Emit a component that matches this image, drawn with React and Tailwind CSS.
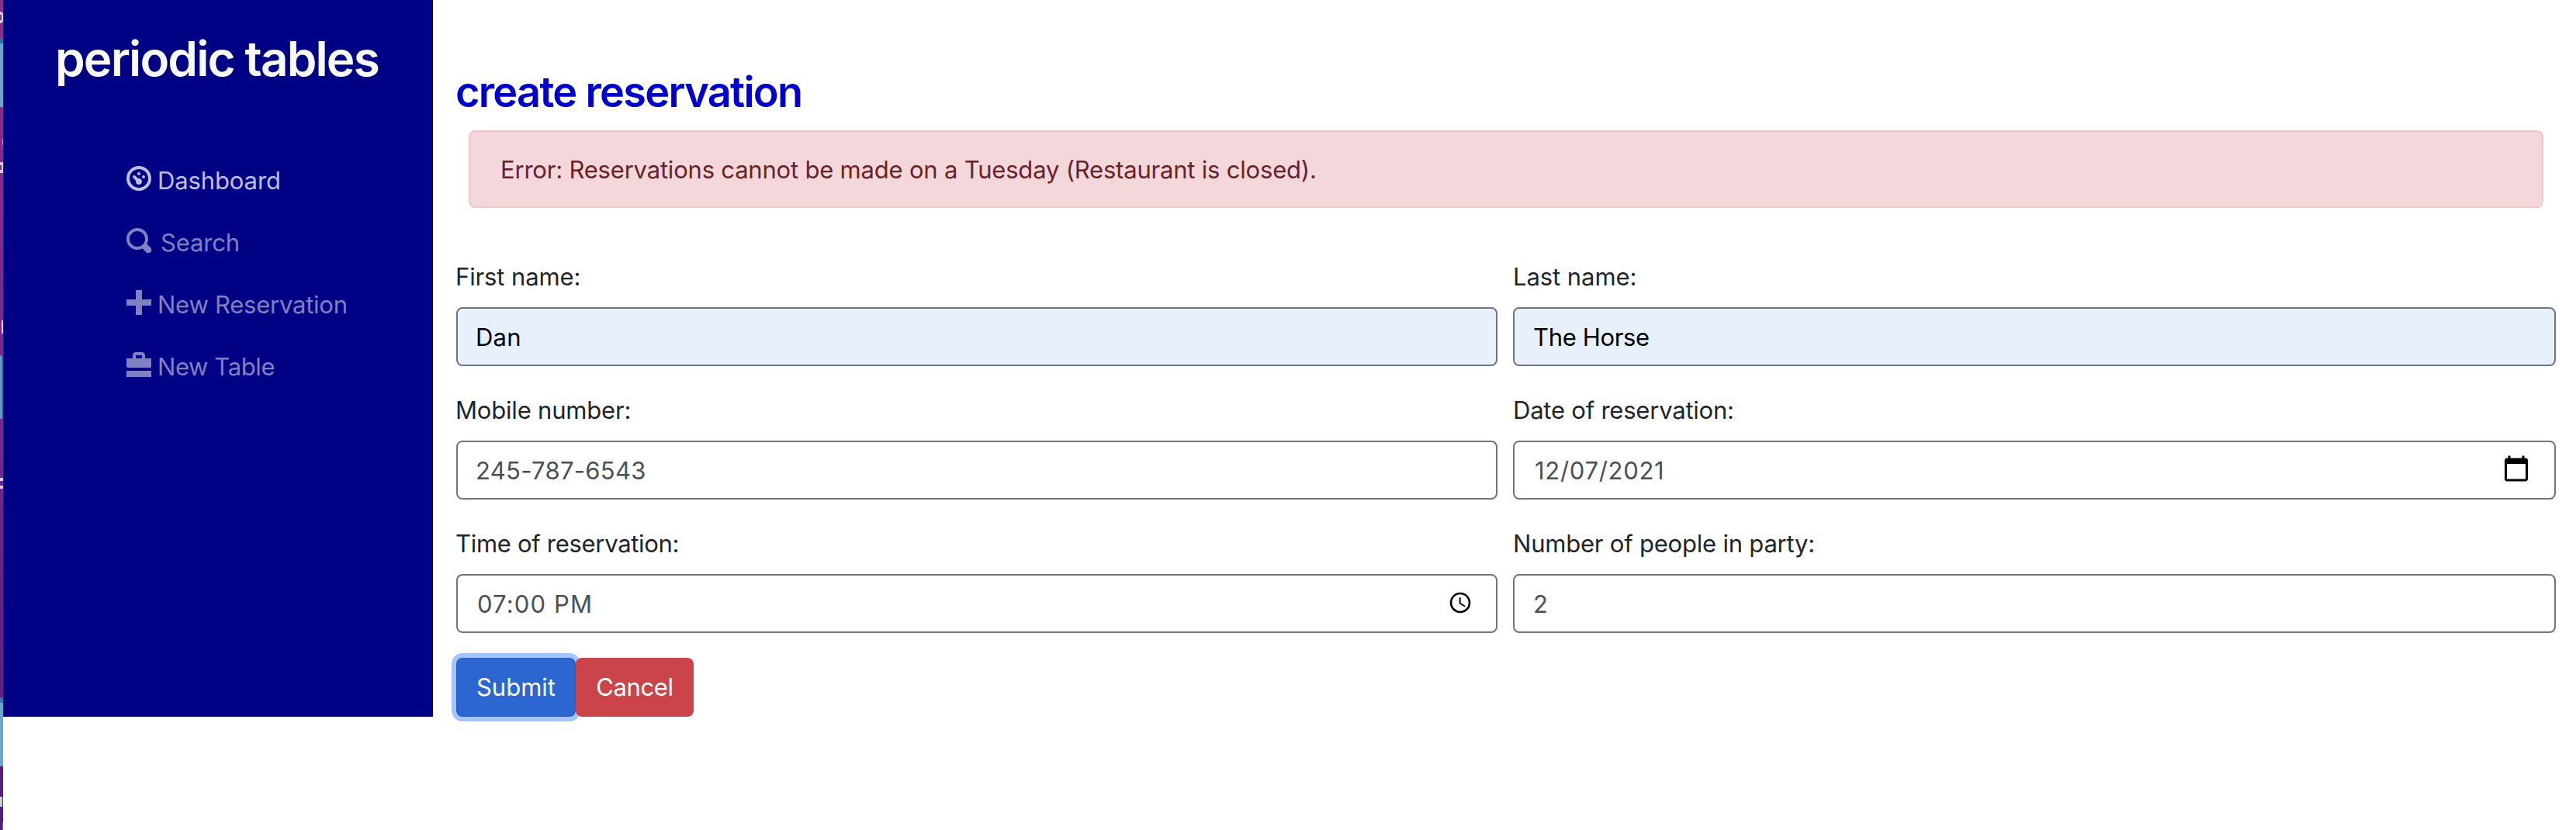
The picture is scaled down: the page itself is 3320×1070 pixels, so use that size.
const NAV = [
  {
    label: "Dashboard",
    text: "tracking-[-0.12px] ml-[8px] text-white/75",
    icon: "text-white/75",
    d: "M4 0c-2.2 0-4 1.8-4 4s1.8 4 4 4 4-1.8 4-4-1.8-4-4-4zm0 1c1.66 0 3 1.34 3 3s-1.34 3-3 3-3-1.34-3-3 1.34-3 3-3zm0 1c-.28 0-.5.22-.5.5s.22.5.5.5.5-.22.5-.5-.22-.5-.5-.5zm-1.66 1a.5.5 0 0 0-.19.84l.91.91c-.02.08-.06.16-.06.25 0 .55.45 1 1 1s1-.45 1-1-.45-1-1-1c-.09 0-.17.04-.25.06l-.91-.91a.5.5 0 0 0-.44-.16.5.5 0 0 0-.06 0zm3.16 0c-.28 0-.5.22-.5.5s.22.5.5.5.5-.22.5-.5-.22-.5-.5-.5z",
  },
  {
    label: "Search",
    text: "tracking-[-0.17px] ml-[12px] text-white/50",
    icon: "text-white/50",
    d: "M3.5 0c-1.93 0-3.5 1.57-3.5 3.5s1.57 3.5 3.5 3.5c.59 0 1.17-.14 1.66-.41a1 1 0 0 0 .13.13l1 1a1.02 1.02 0 1 0 1.44-1.44l-1-1a1 1 0 0 0-.16-.13c.27-.49.44-1.06.44-1.66 0-1.93-1.55-3.5-3.5-3.5zm0 1c1.39 0 2.5 1.11 2.5 2.5 0 .66-.24 1.27-.66 1.72-.01.01-.02.02-.03.03a1 1 0 0 0-.13.13c-.44.4-1.04.63-1.69.63-1.39 0-2.5-1.11-2.5-2.5s1.11-2.5 2.5-2.5z",
  },
  {
    label: "New Reservation",
    text: "tracking-[-0.24px] ml-[8px] text-white/50",
    icon: "text-white/50",
    d: "M3 0v3h-3v2h3v3h2v-3h3v-2h-3v-3h-2z",
  },
  {
    label: "New Table",
    text: "tracking-[-0.4px] ml-[8px] text-white/50",
    icon: "text-white/50",
    d: "M3 0c-.55 0-1 .45-1 1v1h-2v2.5c0 .28.22.5.5.5h7c.28 0 .5-.22.5-.5v-2.5h-2v-1c0-.55-.45-1-1-1h-2zm0 1h2v1h-2v-1zm-3 5v2h8v-2h-8z",
  },
];

function ClockIcon() {
  return (
    <svg viewBox="0 0 24 24" className="mr-[6px] mb-[3px] h-8 w-8 shrink-0 fill-black">
      <path d="M11.99 2C6.47 2 2 6.48 2 12s4.47 10 9.99 10C17.52 22 22 17.52 22 12S17.52 2 11.99 2zM12 20c-4.42 0-8-3.58-8-8s3.58-8 8-8 8 3.58 8 8-3.58 8-8 8zm.5-13H11v6l5.25 3.15.75-1.23-4.5-2.67z" />
    </svg>
  );
}

function CalendarIcon() {
  return (
    <svg viewBox="0 0 24 24" className="mr-[7px] mb-[5px] h-9 w-9 shrink-0 fill-black">
      <path d="M20 3h-1V1h-2v2H7V1H5v2H4c-1.1 0-2 .9-2 2v16c0 1.1.9 2 2 2h16c1.1 0 2-.9 2-2V5c0-1.1-.9-2-2-2zm0 18H4V8h16v13z" />
    </svg>
  );
}

const FIELDS = [
  { label: "First name:", ls: "-ml-px tracking-[-0.12px]", value: "Dan", box: "bg-[#e8effd] text-black", vs: "-ml-px tracking-[0.2px]" },
  { label: "Last name:", ls: "tracking-[-0.07px]", value: "The Horse", box: "bg-[#e8effd] text-black", vs: "tracking-[-0.35px]" },
  { label: "Mobile number:", ls: "-ml-px tracking-[-0.19px]", value: "245-787-6543", box: "bg-white text-[#495057]", vs: "-ml-px tracking-[0.3px]" },
  { label: "Date of reservation:", ls: "tracking-[-0.22px]", value: "12/07/2021", box: "bg-white text-[#495057]", vs: "ml-[2px] tracking-[0.7px]", icon: <CalendarIcon /> },
  { label: "Time of reservation:", ls: "-ml-px tracking-[-0.3px]", value: "07:00 PM", box: "bg-white text-[#495057]", vs: "ml-[1px] tracking-[1.14px]", icon: <ClockIcon /> },
  { label: "Number of people in party:", ls: "tracking-[-0.21px]", value: "2", box: "bg-white text-[#495057]", vs: "tracking-normal" },
];

function Field({ label, ls, value, box, vs, icon }) {
  return (
    <div className="flex flex-col gap-4">
      <label className={`h-12 leading-[50px] text-[#212529] ${ls}`}>{label}</label>
      <div className={`flex h-[76px] items-center justify-between rounded-[8px] border-2 border-[#6f757d] px-6 ${box}`}>
        <span className={`h-12 leading-[50px] ${vs}`}>{value}</span>
        {icon}
      </div>
    </div>
  );
}

/* Sliver of the desktop window that shows past the left edge of the page. */
function DesktopEdge() {
  return (
    <div className="flex h-[1070px] w-1 shrink-0 flex-col overflow-hidden bg-linear-to-b from-[#8c2d86] via-[#7a2590] to-[#541a80]">
      <div className="mt-[15px] h-[15px] w-1 rounded-r-full border-y-4 border-r-2 border-[#d5cfd2]" />
      <div className="mt-[19px] h-[7px] w-1 bg-[#2f6ba8]" />
      <div className="h-[82px] w-1 bg-[#6ca5cc]" />
      <div className="ml-[3px] mt-[41px] h-[8px] w-px bg-[#b79cb8]" />
      <div className="mt-[22px] h-[14px] w-1 border-y-4 border-r-2 border-[#d5cfd2]" />
      <div className="ml-[2px] mt-[190px] h-[17px] w-[2px] bg-[#d5cfd2]" />
      <div className="mt-[28px] h-[82px] w-[3px] rounded-tr-[3px] bg-[#6199c4]" />
      <div className="mt-[76px] h-[14px] w-1 border-y-4 border-[#d5cfd2]" />
      <div className="mt-[269px] h-[7px] w-1 bg-[#38739f]" />
      <div className="h-[82px] w-1 bg-[#6ca5cc]" />
      <div className="mt-[39px] h-[13px] w-[3px] bg-[#cfcfcf]" />
      <div className="ml-[3px] mt-[20px] h-[10px] w-px bg-[#8b6ba5]" />
    </div>
  );
}

export default function App() {
  return (
    <div className="flex h-[1070px] w-[3320px] items-start overflow-hidden bg-white font-['Inter',sans-serif] text-[31px]">
      <DesktopEdge />
      <aside className="h-[924px] w-[554px] shrink-0 border-l border-[#1c1c8c] bg-[#000084] pt-[37px]">
        <h1 className="ml-[66px] h-[77px] whitespace-nowrap text-[62px] font-semibold leading-[77px] tracking-[-1.85px] text-[#f8f9fa]">
          periodic tables
        </h1>
        <nav className="ml-[158px] mt-[94px] flex flex-col gap-8">
          {NAV.map((n) => (
            <a key={n.label} className="flex h-12 whitespace-nowrap">
              <svg viewBox="0 0 8 8" className={`mt-[6px] h-8 w-8 shrink-0 fill-current ${n.icon}`}>
                <path d={n.d} />
              </svg>
              <span className={`leading-[50px] ${n.text}`}>{n.label}</span>
            </a>
          ))}
        </nav>
      </aside>
      <main className="ml-[30px] w-[2706px] pt-[85px]">
        <h2 className="-ml-px h-[67px] whitespace-nowrap text-[54px] font-semibold leading-[67px] tracking-[-1.68px] text-[#0000c8]">
          create reservation
        </h2>
        <div className="mx-4 mt-4 h-[100px] rounded-[8px] border-2 border-[#efc6ca] bg-[#f3d7da] px-[39px] py-6 leading-[50px] tracking-[-0.2px] text-[#6b2227]">
          Error: Reservations cannot be made on a Tuesday (Restaurant is closed).
        </div>
        <form className="mt-16">
          <div className="grid grid-cols-[1342px_1344px] gap-x-5 gap-y-8">
            {FIELDS.map((f) => (
              <Field key={f.label} {...f} />
            ))}
          </div>
          <div className="mt-8 flex text-white">
            <button type="button" className="h-[76px] w-[154px] rounded-[8px] border-2 border-[#2a5fc6] bg-[#2c66d1] leading-[50px] tracking-normal ring-6 ring-[#a3c5fb]">
              Submit
            </button>
            <button type="button" className="relative h-[76px] w-[152px] rounded-[8px] bg-[#ca4449] leading-[50px] tracking-[-0.37px]">
              Cancel
            </button>
          </div>
        </form>
      </main>
    </div>
  );
}
